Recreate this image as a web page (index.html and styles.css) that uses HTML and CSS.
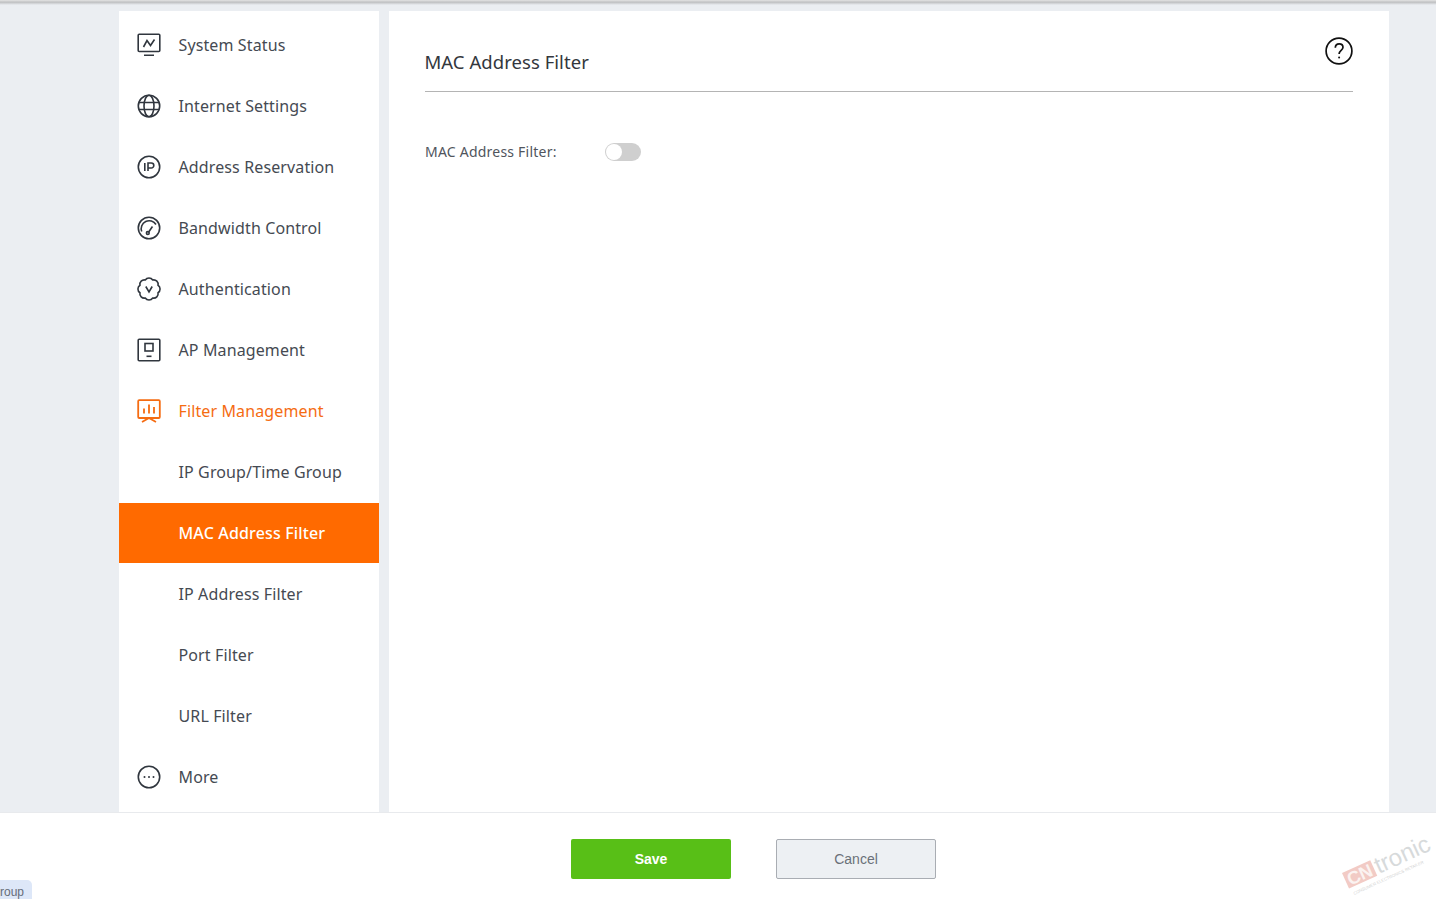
FILE: index.html
```html
<!DOCTYPE html>
<html lang="en">
<head>
<meta charset="utf-8">
<title>MAC Address Filter</title>
<link rel="stylesheet" href="styles.css">
</head>
<body>
<div class="topbar"></div>
<div class="workspace">
  <nav class="sidebar">
    <a class="item"><svg class="icon" viewBox="0 0 24 24"><rect x="1.200" y="1.200" width="21.600" height="17.300" rx="1"/><path d="M6.500 14l3.500-6.500 3.500 5 4-6M7 22.300h10"/></svg><span>System Status</span></a>
    <a class="item"><svg class="icon" viewBox="0 0 24 24"><circle cx="12" cy="12" r="10.700"/><ellipse cx="12" cy="12" rx="5" ry="10.700"/><path d="M1.800 8.500h20.400M1.800 15.500h20.400"/></svg><span>Internet Settings</span></a>
    <a class="item"><svg class="icon" viewBox="0 0 24 24"><circle cx="12" cy="12" r="10.700"/><path d="M7.800 8v8M11 16V8h3.300a2.500 2.500 0 0 1 0 5H11"/></svg><span>Address Reservation</span></a>
    <a class="item"><svg class="icon" viewBox="0 0 24 24"><circle cx="12" cy="12" r="10.700"/><path d="M4.700 15.500a8 8 0 0 1 14.300-7"/><circle cx="10.800" cy="17" r="1.400"/><path d="M11.700 16l3.800-5.500"/></svg><span>Bandwidth Control</span></a>
    <a class="item"><svg class="icon" viewBox="0 0 24 24"><path d="M15.750 2.950A4.500 4.500 0 0 1 21.050 8.250 4.500 4.500 0 0 1 21.050 15.750 4.500 4.500 0 0 1 15.750 21.050 4.500 4.500 0 0 1 8.250 21.050 4.500 4.500 0 0 1 2.950 15.750 4.500 4.500 0 0 1 2.950 8.250 4.500 4.500 0 0 1 8.250 2.950 4.500 4.500 0 0 1 15.750 2.950z"/><path d="M8.800 9.500l3.200 5.500 3.200-5.500"/></svg><span>Authentication</span></a>
    <a class="item"><svg class="icon" viewBox="0 0 24 24"><rect x="1.200" y="1.200" width="21.600" height="21.600" rx="1"/><rect x="8" y="5.500" width="8" height="7.500"/><path d="M9.500 18.300h5"/></svg><span>AP Management</span></a>
    <a class="item open"><svg class="icon" viewBox="0 0 24 24"><rect x="1.200" y="1.200" width="21.600" height="17.800" rx="1"/><path d="M7 9.500v5M12 5.500v9M17 8v6.500M5 23l7-4 7 4"/></svg><span>Filter Management</span></a>
    <a class="item"><span class="sub">IP Group/Time Group</span></a>
    <a class="item active"><span class="sub">MAC Address Filter</span></a>
    <a class="item"><span class="sub">IP Address Filter</span></a>
    <a class="item"><span class="sub">Port Filter</span></a>
    <a class="item"><span class="sub">URL Filter</span></a>
    <a class="item"><svg class="icon" viewBox="0 0 24 24"><circle cx="12" cy="12" r="10.700"/><circle class="dot" cx="7.500" cy="12" r="1"/><circle class="dot" cx="12" cy="12" r="1"/><circle class="dot" cx="16.500" cy="12" r="1"/></svg><span>More</span></a>
  </nav>
  <main class="content">
    <header class="head">
      <h1 class="title">MAC Address Filter</h1>
      <svg class="help" viewBox="0 0 28 28"><circle cx="14" cy="14" r="12.900"/><path d="M10.300 10.800c0-2.400 1.700-4 3.900-4s3.800 1.500 3.800 3.500c0 3-3.900 3.300-3.900 6.700"/><circle class="dot" cx="14.100" cy="20.600" r="1"/></svg>
    </header>
    <div class="field">
      <label class="label">MAC Address Filter:</label>
      <span class="switch"><span class="knob"></span></span>
    </div>
  </main>
</div>
<footer class="footer">
  <button class="btn save">Save</button>
  <button class="btn cancel">Cancel</button>
</footer>
<div class="badge">roup</div>
<div class="mark"><span class="cn">CN</span><span class="tronic">tronic</span><span class="tag">CONSUMER ELECTRONICS RETAILER</span></div>
</body>
</html>
```
FILE: styles.css
```css
* { box-sizing: border-box; }
html, body { margin: 0; height: 899px; overflow: hidden; }
body {
  display: flex;
  flex-direction: column;
  background: #ebeef2;
  font-family: "Noto Sans", "Open Sans", sans-serif;
  color: #454a52;
  position: relative;
}
.topbar {
  height: 5px;
  flex: none;
  background: linear-gradient(#e4e4e4, #bfc0c2 45%, #ebeef2);
}
.workspace {
  flex: 1;
  min-height: 0;
  display: flex;
  gap: 10px;
  padding: 6px 0 0 119px;
}
.sidebar {
  width: 260px;
  background: #fff;
  padding-top: 4px;
  display: flex;
  flex-direction: column;
  gap: 1px;
}
.item {
  height: 60px;
  flex: none;
  display: flex;
  align-items: center;
  padding-left: 17.500px;
  font-size: 16px;
  letter-spacing: .12px;
  color: #454a52;
}
.item.open { color: #f56c12; }
.item.active { background: #ff6a00; color: #fff; font-weight: 500; letter-spacing: .15px; }
.icon {
  width: 24px;
  height: 24px;
  margin-right: 18px;
  flex: none;
  fill: none;
  stroke: #30363e;
  stroke-width: 1.600;
}
.item.open .icon { stroke: #f56c12; stroke-width: 1.800; }
.icon .dot { fill: #30363e; stroke: none; }
.sub { margin-left: 42px; }
.content {
  width: 1000px;
  background: #fff;
  padding: 0 36px;
}
.head {
  height: 81px;
  border-bottom: 1px solid #b4b4b4;
  display: flex;
  justify-content: space-between;
  align-items: flex-start;
}
.title {
  margin: 35px 0 0 -.5px;
  font-size: 18.500px;
  line-height: 32px;
  font-weight: 400;
  letter-spacing: .05px;
  color: #33373d;
}
.help {
  width: 28px;
  height: 28px;
  margin-top: 26px;
  margin-right: .5px;
  fill: none;
  stroke: #111;
  stroke-width: 1.700;
}
.help .dot { fill: #111; stroke: none; }
.field {
  margin-top: 50px;
  height: 20px;
  display: flex;
  align-items: center;
}
.label {
  width: 180px;
  margin-bottom: 2px;
  font-size: 14px;
  letter-spacing: .22px;
  color: #50555d;
}
.switch {
  width: 36px;
  height: 18px;
  border-radius: 9px;
  background: #cfcfcf;
  padding: 1px;
}
.knob {
  display: block;
  width: 16px;
  height: 16px;
  border-radius: 50%;
  background: #fff;
}
.footer {
  flex: none;
  height: 87px;
  background: #fff;
  border-top: 1px solid #e8eaed;
  display: flex;
  gap: 45px;
  padding: 26px 0 0 571px;
}
.btn {
  width: 160px;
  height: 40px;
  border-radius: 2px;
  font-family: "Liberation Sans", Arial, sans-serif;
  font-size: 14px;
}
.save {
  background: #58bf17;
  border: 0;
  color: #fff;
  font-weight: 700;
}
.cancel {
  background: #edf0f3;
  border: 1px solid #a9adb3;
  color: #6b7078;
}
.badge {
  position: absolute;
  left: 0;
  bottom: 0;
  width: 32px;
  height: 19px;
  background: #dde7f8;
  border-radius: 0 5px 0 0;
  font-family: "Liberation Sans", Arial, sans-serif;
  font-size: 12px;
  line-height: 24px;
  color: #666d78;
  white-space: nowrap;
}
.mark {
  position: absolute;
  left: 1342px;
  top: 873px;
  width: 94px;
  height: 17px;
  transform: rotate(-24.400deg);
  transform-origin: 0 0;
  font-family: "Liberation Sans", Arial, sans-serif;
  line-height: 1;
}
.cn {
  position: absolute;
  left: 0;
  top: 0;
  width: 31px;
  height: 17px;
  background: #f2cbc5;
  color: #fbf3f1;
  font-size: 18px;
  font-weight: 700;
  text-align: center;
}
.tronic {
  position: absolute;
  left: 33px;
  bottom: -3px;
  font-size: 24px;
  color: #d7dadb;
}
.tag {
  position: absolute;
  left: 2px;
  top: 22px;
  font-size: 4.200px;
  white-space: nowrap;
  color: #d2d2d2;
}
```
